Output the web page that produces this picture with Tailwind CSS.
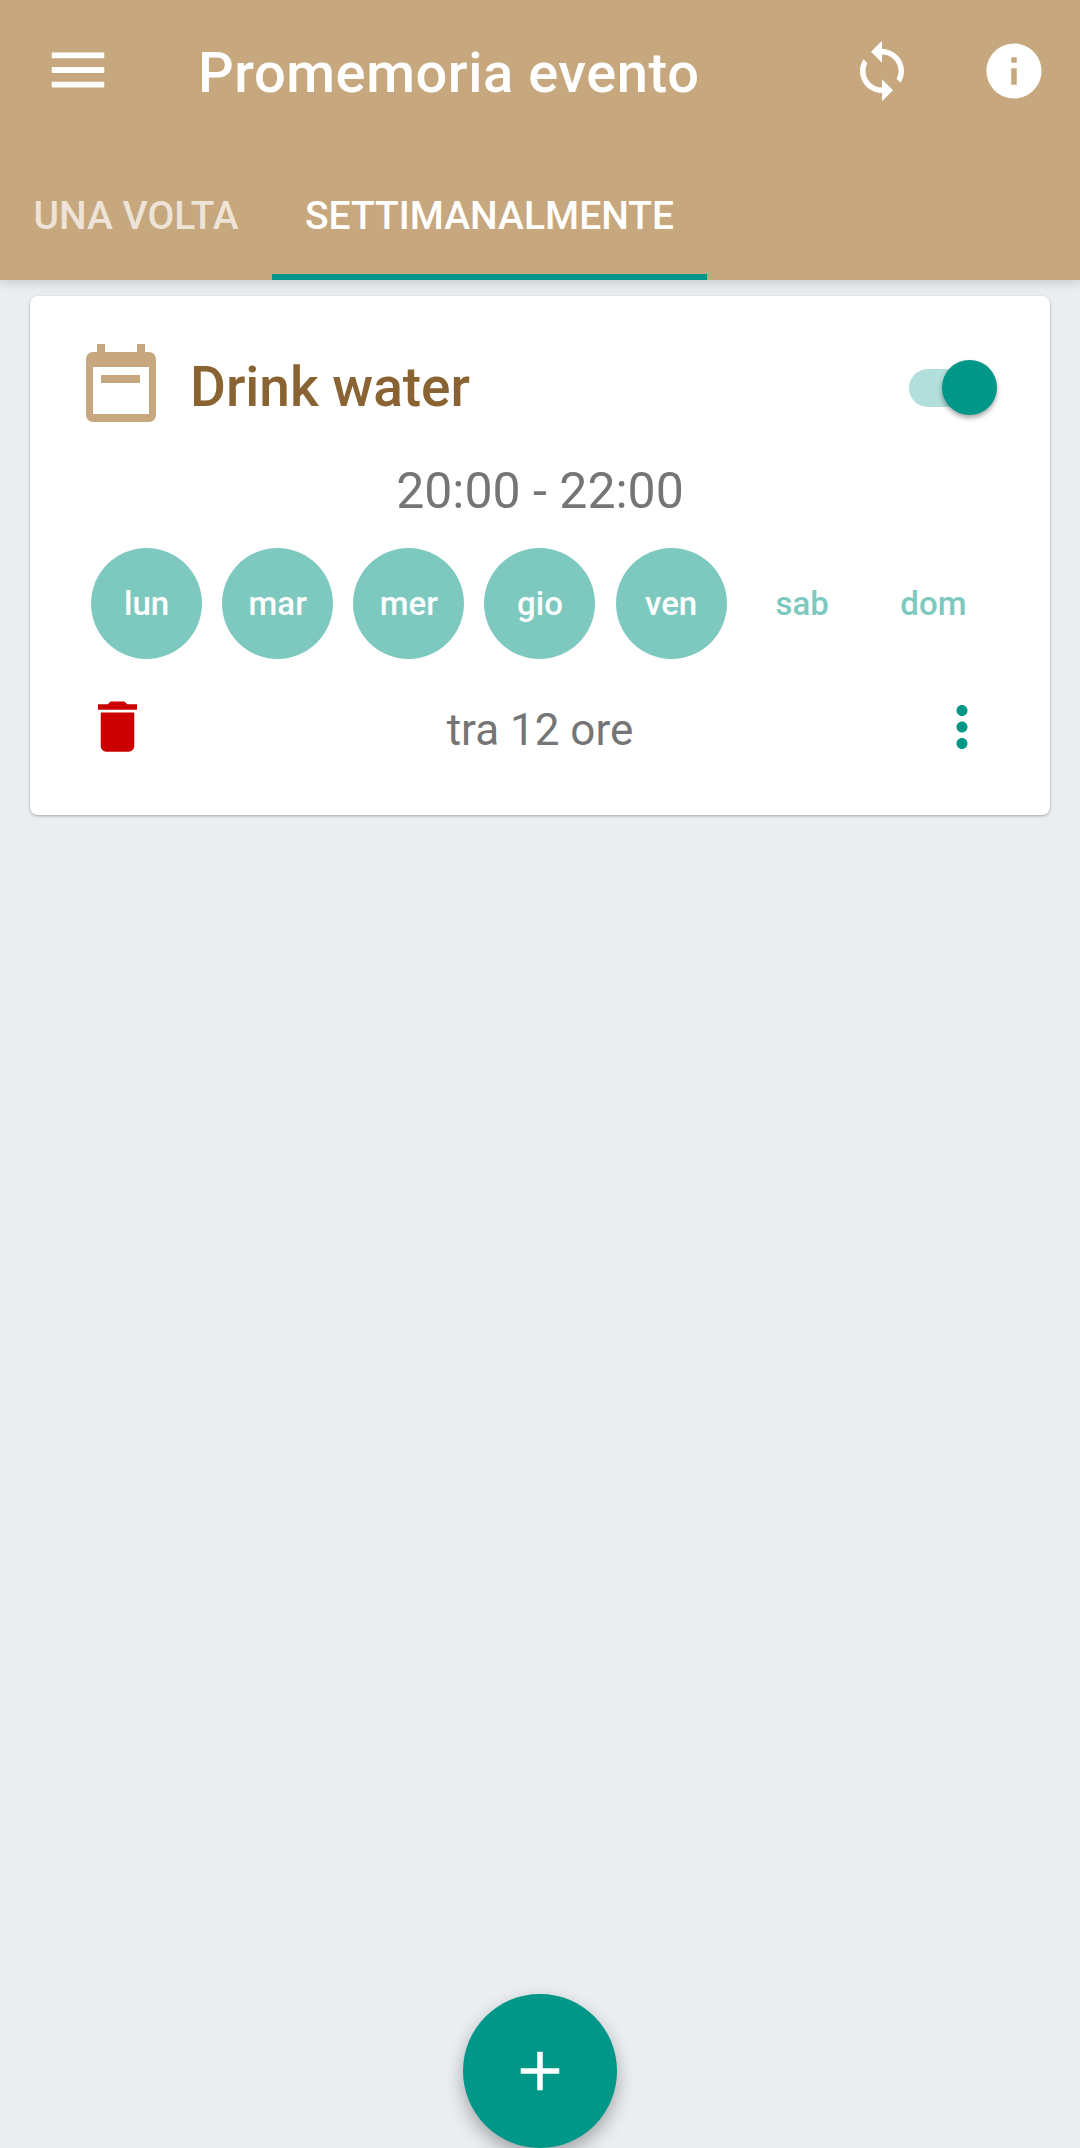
<!DOCTYPE html>
<html lang="it">
<head>
  <meta charset="UTF-8" />
  <meta name="viewport" content="width=device-width, initial-scale=1.0" />
  <title>Promemoria evento</title>
  <script src="https://cdn.jsdelivr.net/npm/@tailwindcss/browser@4"></script>
</head>
<body class="bg-[#eaeef1] font-['Roboto',sans-serif]">
  <div class="relative h-[2148px] w-[1080px] overflow-hidden">

    <!-- Barra superiore -->
    <header class="relative z-10 h-[280px] bg-[#c7a77d] text-white shadow-[0_3px_10px_rgba(0,0,0,0.14)]">
      <div class="flex h-[142px] items-center pl-[43px] pr-[33px]">
        <svg class="h-[70px] w-[70px] mb-[3px] fill-white" viewBox="0 0 24 24"><path d="M3 18h18v-2H3v2zm0-5h18v-2H3v2zm0-7v2h18V6H3z"/></svg>
        <h1 class="ml-[85px] mt-[4px] flex-1 text-[56px] font-medium leading-none tracking-[0.55px]">Promemoria evento</h1>
        <svg class="h-[66px] w-[66px] fill-white" viewBox="0 0 24 24"><path d="M12 4V1L8 5l4 4V6c3.31 0 6 2.69 6 6 0 1.01-.25 1.97-.7 2.8l1.46 1.46C19.54 15.03 20 13.57 20 12c0-4.42-3.58-8-8-8zm0 14c-3.31 0-6-2.69-6-6 0-1.01.25-1.97.7-2.8L5.24 7.74C4.46 8.97 4 10.43 4 12c0 4.42 3.58 8 8 8v3l4-4-4-4v3z"/></svg>
        <svg class="ml-[66px] h-[66px] w-[66px] fill-white" viewBox="0 0 24 24"><path d="M12 2C6.48 2 2 6.48 2 12s4.48 10 10 10 10-4.48 10-10S17.52 2 12 2zm1 15h-2v-6h2v6zm0-8h-2V7h2v2z"/></svg>
      </div>
      <!-- Schede -->
      <div class="flex h-[138px] text-[39px] font-medium">
        <div class="flex w-[272px] items-center justify-center pt-[11px] text-white/70">UNA VOLTA</div>
        <div class="flex w-[435px] items-center justify-center border-b-[6px] border-[#009688] pt-[17px]">SETTIMANALMENTE</div>
      </div>
    </header>

    <!-- Scheda evento -->
    <main class="px-[30px] pt-[16px]">
      <div class="h-[519px] rounded-[8px] bg-white px-[51px] pt-[48px] shadow-[0_1px_3px_rgba(0,0,0,0.3)]">
        <div class="flex h-[78px] items-center pl-[5px]">
          <svg class="h-[78px] w-[70px] fill-[#c7a77d]" viewBox="0 0 70 78"><path fill-rule="evenodd" d="M11 0h8v8h32V0h8v8h4a7 7 0 0 1 7 7v56a7 7 0 0 1-7 7H7a7 7 0 0 1-7-7V15a7 7 0 0 1 7-7h4V0zM7 23v47h56V23H7zm8 8h39v8H15v-8z"/></svg>
          <span class="ml-[34px] mt-[9px] flex-1 text-[55px] font-medium leading-none text-[#8a6333]">Drink water</span>
          <div class="relative mr-[2px] mt-[9px] h-[38px] w-[88px]">
            <div class="h-[38px] w-[80px] rounded-full bg-[#b2dfdb]"></div>
            <div class="absolute -top-[9px] right-0 h-[55px] w-[55px] rounded-full bg-[#009688] shadow-[0_3px_5px_rgba(0,0,0,0.35)]"></div>
          </div>
        </div>

        <p class="mt-[41px] text-center text-[50px] leading-[56px] text-[#757575]">20:00 - 22:00</p>

        <div class="mt-[29px] grid grid-cols-7 text-[33px] font-medium">
          <div class="mx-auto flex h-[111px] w-[111px] items-center justify-center rounded-full bg-[#7dc9bf] text-white">lun</div>
          <div class="mx-auto flex h-[111px] w-[111px] items-center justify-center rounded-full bg-[#7dc9bf] text-white">mar</div>
          <div class="mx-auto flex h-[111px] w-[111px] items-center justify-center rounded-full bg-[#7dc9bf] text-white">mer</div>
          <div class="mx-auto flex h-[111px] w-[111px] items-center justify-center rounded-full bg-[#7dc9bf] text-white">gio</div>
          <div class="mx-auto flex h-[111px] w-[111px] items-center justify-center rounded-full bg-[#7dc9bf] text-white">ven</div>
          <div class="mx-auto flex h-[111px] w-[111px] items-center justify-center text-[#7dc9bf]">sab</div>
          <div class="mx-auto flex h-[111px] w-[111px] items-center justify-center text-[#7dc9bf]">dom</div>
        </div>

        <div class="mt-[34px] flex h-[67px] items-center pl-[3px] pr-[4px]">
          <svg class="h-[67px] w-[67px] fill-[#cc0000]" viewBox="0 0 24 24"><path d="M6 19c0 1.1.9 2 2 2h8c1.1 0 2-.9 2-2V7H6v12zM19 4h-3.5l-1-1h-5l-1 1H5v2h14V4z"/></svg>
          <span class="mt-[7px] flex-1 text-center text-[44px] leading-none text-[#757575]">tra 12 ore</span>
          <svg class="h-[66px] w-[66px] fill-[#009688]" viewBox="0 0 24 24"><path d="M12 8c1.1 0 2-.9 2-2s-.9-2-2-2-2 .9-2 2 .9 2 2 2zm0 2c-1.1 0-2 .9-2 2s.9 2 2 2 2-.9 2-2-.9-2-2-2zm0 6c-1.1 0-2 .9-2 2s.9 2 2 2 2-.9 2-2-.9-2-2-2z"/></svg>
        </div>
      </div>
    </main>

    <!-- Pulsante aggiungi -->
    <button class="absolute left-[463px] top-[1994px] flex h-[154px] w-[154px] items-center justify-center rounded-full bg-[#009688] shadow-[0_8px_18px_rgba(0,0,0,0.3)]">
      <svg class="h-[66px] w-[66px] fill-white" viewBox="0 0 24 24"><path d="M19 13h-6v6h-2v-6H5v-2h6V5h2v6h6v2z"/></svg>
    </button>
  </div>
</body>
</html>
